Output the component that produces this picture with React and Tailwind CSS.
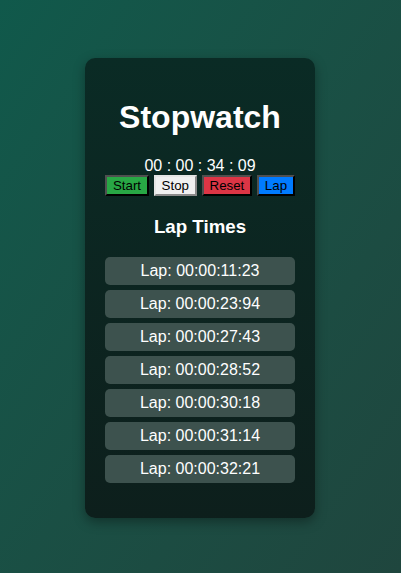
import { useState } from "react";

const laps = [
  "00:00:11:23",
  "00:00:23:94",
  "00:00:27:43",
  "00:00:28:52",
  "00:00:30:18",
  "00:00:31:14",
  "00:00:32:21",
];

export default function App() {
  const [time] = useState("00 : 00 : 34 : 09");

  const btn =
    "px-[6px] py-[1px] text-[13.333px] leading-[15px] border-2 border-t-[#4f4f4f] border-l-[#4f4f4f] border-b-black border-r-black text-black";

  return (
    <div
      className="min-h-screen w-full flex items-center justify-center pt-[3px] bg-gradient-to-br from-[#10594b] to-[#1f463e]"
      style={{ fontFamily: '"Liberation Sans", Arial, sans-serif' }}
    >
      <div className="w-[230px] mr-[1px] p-5 rounded-[10px] bg-gradient-to-b from-[#0a2b25] to-[#0d1f1c] shadow-[0_4px_12px_rgba(0,0,0,0.35)] text-white text-center">
        <h1 className="text-[32px] font-bold leading-[37px] my-[21px]">Stopwatch</h1>

        <div className="text-[16px] leading-[18px]">{time}</div>

        <div className="flex justify-center gap-[4.5px]">
          <button className={`${btn} bg-[#28a745]`}>Start</button>
          <button className="px-[6px] py-[1px] text-[13.333px] leading-[15px] border-2 border-t-[#e5e5e5] border-l-[#e5e5e5] border-b-[#8a8a8a] border-r-[#8a8a8a] bg-[#f0f0f0] text-black">
            Stop
          </button>
          <button className={`${btn} bg-[#dc3545]`}>Reset</button>
          <button className={`${btn} bg-[#007bff]`}>Lap</button>
        </div>

        <h3 className="text-[18.72px] font-bold leading-[21px] mt-[20px] mb-[20px]">Lap Times</h3>

        <div className="flex flex-col gap-[5px] mb-[15px]">
          {laps.map((l, i) => (
            <div
              key={i}
              className="bg-[#3d524e] rounded-[5px] py-[5px] text-[16px] leading-[18px]"
            >
              Lap: {l}
            </div>
          ))}
        </div>
      </div>
    </div>
  );
}
